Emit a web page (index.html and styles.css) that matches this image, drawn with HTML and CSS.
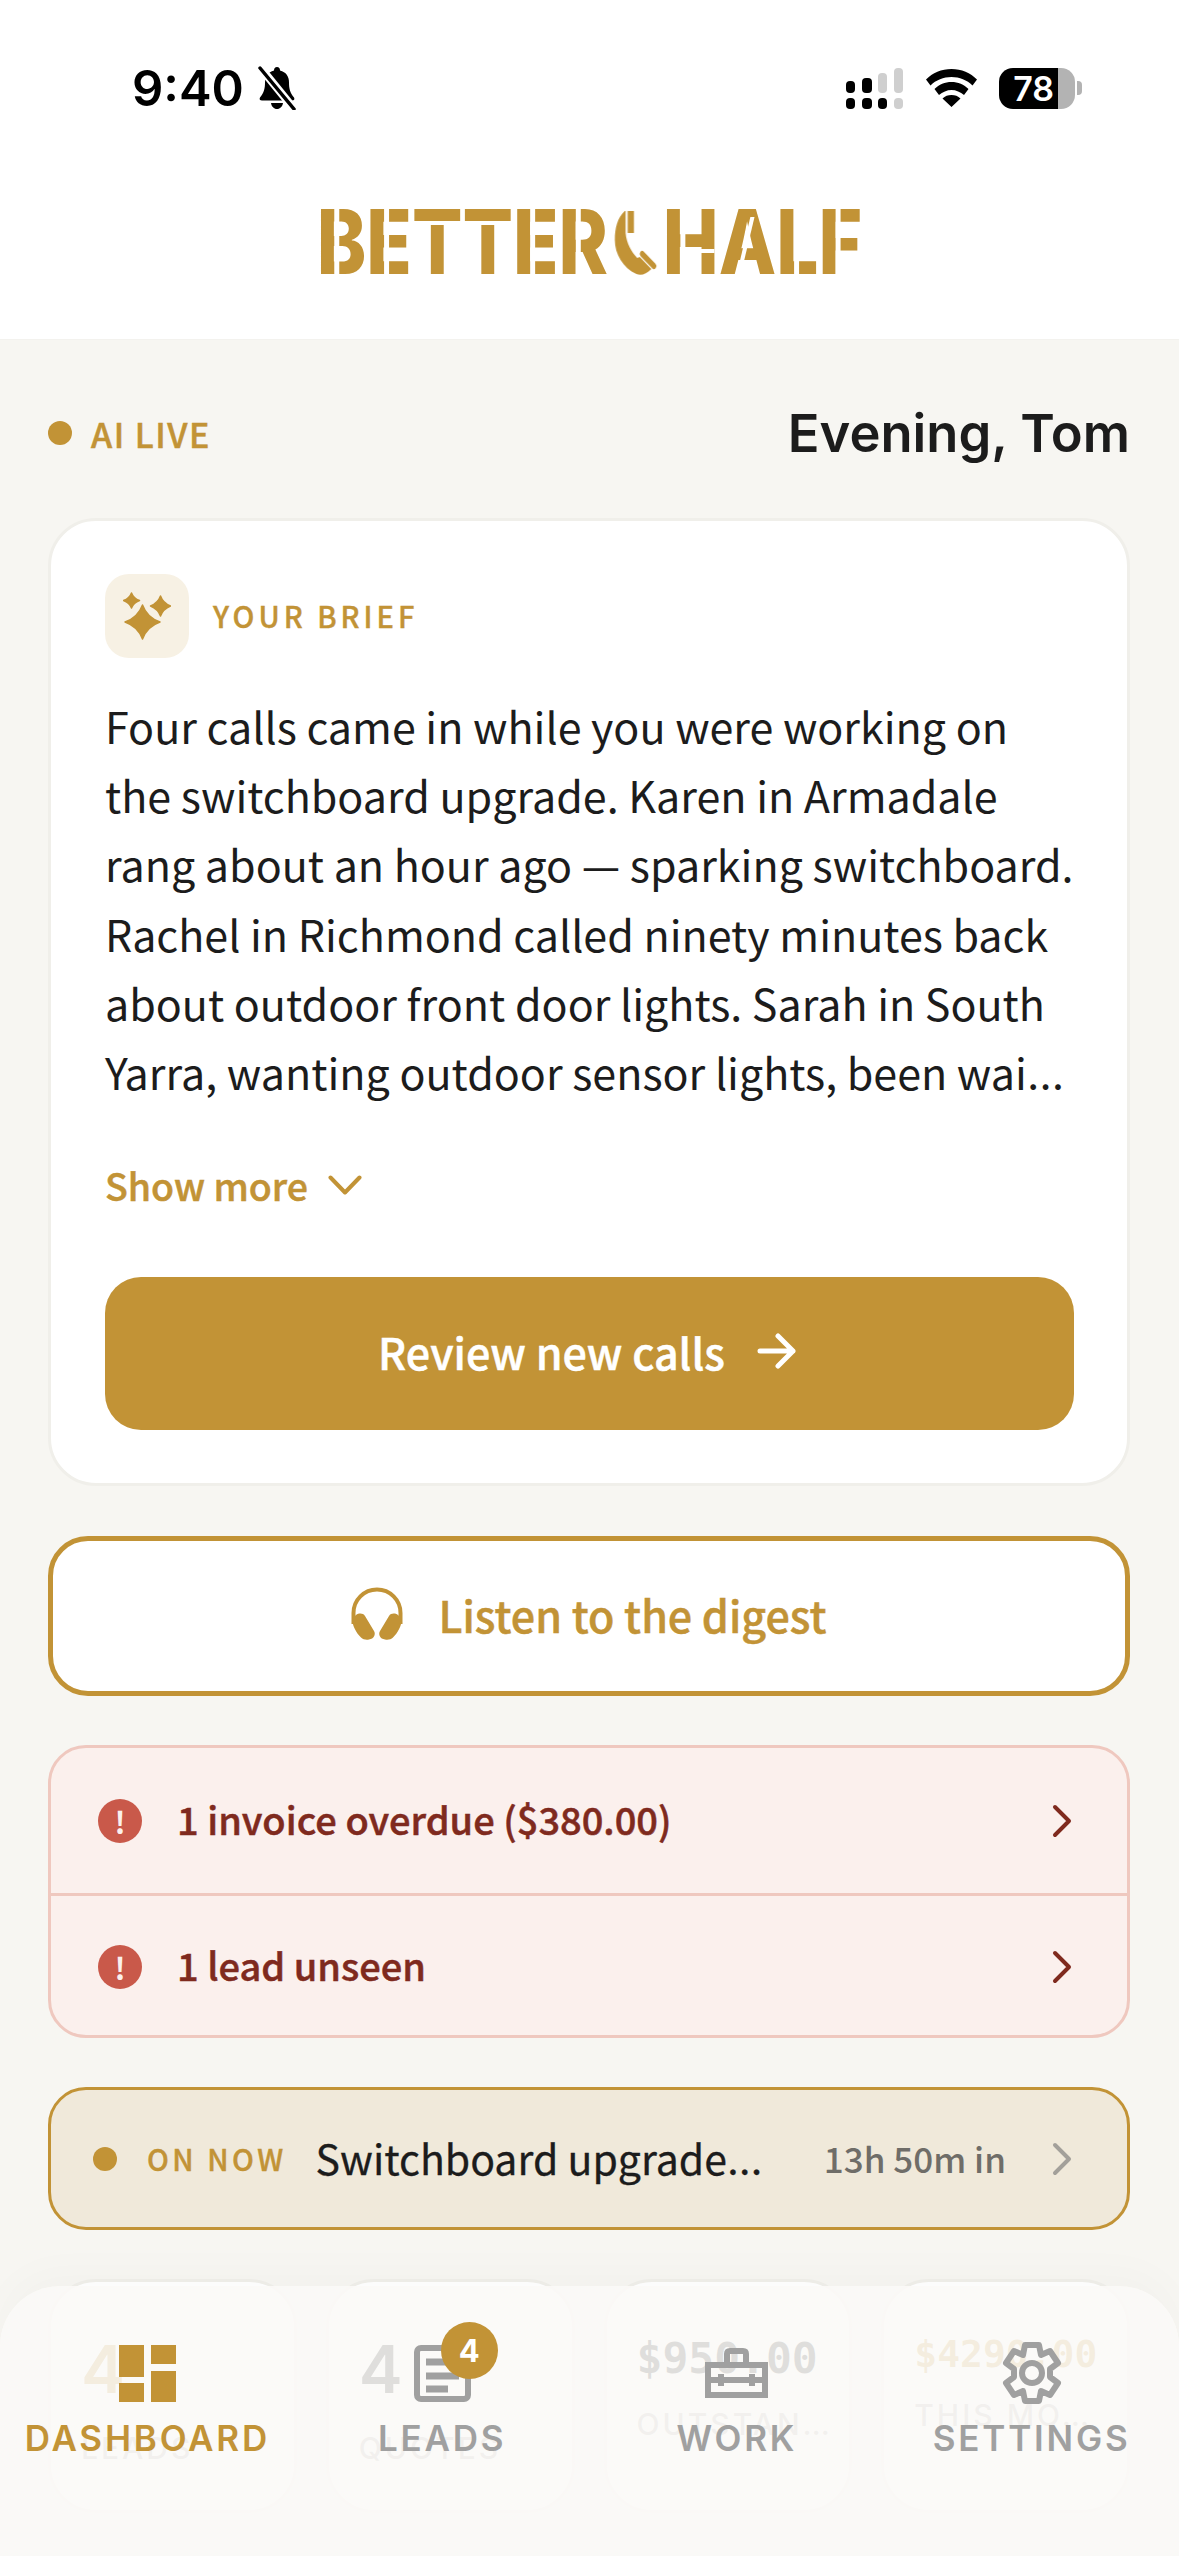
FILE: index.html
```html
<!DOCTYPE html>
<html lang="en">
<head>
    <meta charset="UTF-8">
    <meta name="viewport" content="width=device-width, initial-scale=1.0">
    <title>Better Half Dashboard</title>
    <link rel="stylesheet" href="styles.css">
</head>
<body>
    <div class="phone">
        <header class="top">
            <div class="status-bar">
                <div class="status-left">
                    <span class="clock">9:40</span>
                    <svg class="bell" viewBox="0 0 40 44">
                        <path fill="#000" d="M20 1c2 0 3 1.500 3 3.500 6 1.500 9 6 9 12 0 6 1 10 5 15 1 2 0 3-2 3H5c-2 0-3-1-2-3 4-5 5-9 5-15 0-6 3-10.500 9-12C17 2.500 18 1 20 1zM14 37h12c-.5 3.500-3 6-6 6s-5.500-2.500-6-6z"/>
                        <path stroke="#fff" stroke-width="8" d="M3 1l34 42"/>
                        <path stroke="#000" stroke-width="3.500" stroke-linecap="round" d="M3 2l34 41"/>
                    </svg>
                </div>
                <div class="status-right">
                    <svg class="signal" viewBox="0 0 59 41">
                        <g fill="#000">
                            <rect x="0" y="13" width="9" height="12" rx="4"/><rect x="16" y="10" width="10" height="15" rx="4"/>
                            <rect x="0" y="30" width="9" height="11" rx="4"/><rect x="16" y="30" width="10" height="11" rx="4"/><rect x="32" y="30" width="9" height="11" rx="4"/>
                        </g>
                        <g fill="#cfcfcf">
                            <rect x="32" y="5" width="9" height="20" rx="4"/><rect x="48" y="0" width="9" height="25" rx="4"/>
                            <rect x="48" y="30" width="9" height="11" rx="4"/>
                        </g>
                    </svg>
                    <svg class="wifi" viewBox="0 0 51 38">
                        <path fill="#000" d="M25.500 0c10 0 19 4 25.500 10.500l-4.500 6C41 11 33.500 8 25.500 8S10 11 4.500 16.500L0 10.500C6.500 4 15.500 0 25.500 0zM25.500 13c6.500 0 12.500 2.500 17 7l-4.500 6c-3.500-3-8-5-12.500-5S16.500 23 13 26l-4.500-6c4.500-4.500 10.500-7 17-7zM25.500 26c3.500 0 6.500 1 9 3.500L25.500 38l-9-8.500c2.500-2.500 5.500-3.500 9-3.500z"/>
                    </svg>
                    <div class="battery">
                        <span class="battery-level">78</span>
                        <span class="battery-rest"></span>
                        <span class="battery-nub"></span>
                    </div>
                </div>
            </div>
            <div class="logo" aria-label="Better Half">
                <span class="st">B</span><span class="st">E</span><span class="sh">T</span><span class="sh">T</span><span class="st">E</span><span class="st">R</span><svg class="logo-phone" viewBox="0 0 50 65"><path fill="#c29336" d="M12 1C3 8 0 18 0 30c0 14 10 28 26 34 6 2 12 0 18-5L30 47l-3 1C20 42 14 33 13 23V1zM15.500 1H23v22h-7.500z"/><path stroke="#c29336" stroke-width="6" stroke-linecap="round" d="M33 44l14 12"/></svg><span class="st sh-h">H</span><span class="sv">A</span><span class="st">L</span><span class="st">F</span>
            </div>
        </header>

        <main class="content">
            <div class="greeting-row">
                <div class="live"><span class="dot"></span>AI LIVE</div>
                <h1 class="greeting">Evening, Tom</h1>
            </div>

            <section class="brief-card">
                <div class="brief-head">
                    <span class="brief-icon">
                        <svg viewBox="0 0 48 48" width="48" height="48">
                            <path fill="#c29336" stroke="#c29336" stroke-width="1.500" stroke-linejoin="round" d="M19.500 13Q24 25.500 37 30 24 34.500 19.500 47 15 34.500 2 30 15 25.500 19.500 13zM8.500 1Q10.500 6.500 16.500 8.500 10.500 10.500 8.500 16 6.500 10.500 .5 8.500 6.500 6.500 8.500 1zM37.500 4Q40 11 47.500 14 40 17 37.500 24 35 17 27.500 14 35 11 37.500 4z"/>
                        </svg>
                    </span>
                    <span class="brief-label">YOUR BRIEF</span>
                </div>
                <p class="brief-text">Four calls came in while you were working on the switchboard upgrade. Karen in Armadale rang about an hour ago — sparking switchboard. Rachel in Richmond called ninety minutes back about outdoor front door lights. Sarah in South Yarra, wanting outdoor sensor lights, been wai<span class="ell">…</span></p>
                <div class="show-more">Show more
                    <svg viewBox="0 0 34 20" width="34" height="20"><path fill="none" stroke="#c29336" stroke-width="4" stroke-linecap="round" stroke-linejoin="round" d="M2.500 2.500L17 17.500 31.500 2.500"/></svg>
                </div>
                <button class="review-btn">Review new calls
                    <svg viewBox="0 0 40 36" width="40" height="36"><path fill="none" stroke="#fff" stroke-width="5" stroke-linecap="round" stroke-linejoin="round" d="M3 18h33M21 3l15 15-15 15"/></svg>
                </button>
            </section>

            <button class="digest-btn">
                <svg viewBox="0 0 52 53" width="52" height="53">
                    <path fill="none" stroke="#c29336" stroke-width="4" d="M2.500 37V26a23.500 23.500 0 0 1 47 0v11"/>
                    <path fill="#c29336" d="M1 30h2l2-2c3-2 7-2 9 1l9 15c2 3 0 8-5 8.500-3 .5-6 0-8-2-5-5-9-12-9-20.500zM51 30h-2l-2-2c-3-2-7-2-9 1l-9 15c-2 3 0 8 5 8.500 3 .5 6 0 8-2 5-5 9-12 9-20.500z"/>
                </svg>
                Listen to the digest
            </button>

            <section class="alerts">
                <div class="alert-row">
                    <span class="alert-icon">!</span>
                    <span class="alert-text">1 invoice overdue ($380.00)</span>
                    <svg class="chev" viewBox="0 0 20 34"><path fill="none" stroke="#7f2a1e" stroke-width="4" stroke-linecap="round" stroke-linejoin="round" d="M3 3l14 14L3 31"/></svg>
                </div>
                <div class="alert-row">
                    <span class="alert-icon">!</span>
                    <span class="alert-text">1 lead unseen</span>
                    <svg class="chev" viewBox="0 0 20 34"><path fill="none" stroke="#7f2a1e" stroke-width="4" stroke-linecap="round" stroke-linejoin="round" d="M3 3l14 14L3 31"/></svg>
                </div>
            </section>

            <section class="on-now">
                <span class="dot"></span>
                <span class="on-label">ON NOW</span>
                <span class="on-title">Switchboard upgrade<span class="ell">…</span></span>
                <span class="on-time">13h 50m in</span>
                <svg class="chev" viewBox="0 0 20 34"><path fill="none" stroke="#a3a09a" stroke-width="4" stroke-linecap="round" stroke-linejoin="round" d="M3 3l14 14L3 31"/></svg>
            </section>

            <section class="stats">
                <div class="stat stat-count"><div class="stat-num gold">4</div><div class="stat-label">LEADS</div></div>
                <div class="stat stat-count"><div class="stat-num">4</div><div class="stat-label">QUOTES</div></div>
                <div class="stat stat-money"><div class="stat-num">$950.00</div><div class="stat-label">OUTSTAN…</div></div>
                <div class="stat stat-money long"><div class="stat-num gold">$4290.00</div><div class="stat-label">THIS MO…</div></div>
            </section>
        </main>

        <nav class="tabbar">
            <a class="tab active">
                <span class="tab-icon">
                    <svg viewBox="0 0 57 57" width="57" height="57"><path fill="#c29336" d="M0 0h25v32H0zM0 38h25v19H0zM32 0h25v19H32zM32 26h25v31H32z"/></svg>
                </span>
                <span class="tab-label">DASHBOARD</span>
            </a>
            <a class="tab">
                <span class="tab-icon">
                    <svg viewBox="0 0 57 57" width="57" height="57"><rect x="3" y="3" width="51" height="51" rx="4" fill="none" stroke="#a0a0a0" stroke-width="6"/><path stroke="#a0a0a0" stroke-width="7" d="M12 17h33M12 31h33M12 44h22"/></svg>
                    <b class="badge">4</b>
                </span>
                <span class="tab-label">LEADS</span>
            </a>
            <a class="tab">
                <span class="tab-icon">
                    <svg viewBox="0 0 63 50" width="63" height="50"><g fill="none" stroke="#a0a0a0" stroke-width="6"><path d="M3 17h57v30H3zM22 16V6c0-2 1-3 3-3h13c2 0 3 1 3 3v10"/><path d="M3 32h57"/></g><path stroke="#a0a0a0" stroke-width="6" d="M16 26v12M47 26v12"/></svg>
                </span>
                <span class="tab-label">WORK</span>
            </a>
            <a class="tab">
                <span class="tab-icon">
                    <svg viewBox="0 0 62 62" width="62" height="62"><g fill="none" stroke="#a0a0a0" stroke-width="6" stroke-linejoin="round"><circle cx="31" cy="31" r="10"/><path d="M24 3h14l2 10 9-4 8 12-8 6v8l8 6-8 12-9-4-2 10H24l-2-10-9 4-8-12 8-6v-8l-8-6 8-12 9 4z"/></g></svg>
                </span>
                <span class="tab-label">SETTINGS</span>
            </a>
        </nav>
    </div>
</body>
</html>
```

FILE: styles.css
```css
:root {
    --gold: #c29336;
    --bg: #f7f6f2;
    --ink: #1c1c1c;
    --sans: "Noto Sans CJK SC", "Noto Sans", sans-serif;
    --head: Inter, "Noto Sans", sans-serif;
}
* { box-sizing: border-box; margin: 0; padding: 0; }
body { background: var(--bg); font-family: var(--sans); color: var(--ink); }
.phone {
    position: relative;
    width: 1179px;
    height: 2556px;
    overflow: hidden;
    background: var(--bg);
}
/* the CJK font centres its ellipsis, the design has it on the baseline */
.ell { font-family: Inter, sans-serif; }

/* header */
.top { background: #fff; height: 340px; border-bottom: 1px solid #f3f2ee; }
.status-bar {
    display: flex;
    justify-content: space-between;
    align-items: center;
    height: 176px;
    padding: 0 97px 0 132px;
}
.status-left, .status-right { display: flex; align-items: center; }
.clock { font-family: var(--head); font-weight: 600; font-size: 49px; color: #000; }
.bell { width: 40px; height: 44px; margin-left: 13px; }
.signal { width: 59px; height: 41px; }
.wifi { width: 51px; height: 38px; margin-left: 21px; }
.battery { display: flex; align-items: center; height: 41px; margin-left: 22px; }
.battery-level {
    width: 59px;
    height: 41px;
    padding-right: 4px;
    background: #000;
    color: #fff;
    border-radius: 14px 0 0 14px;
    font-family: var(--head);
    font-weight: 600;
    font-size: 34px;
    line-height: 41px;
    text-align: right;
}
.battery-rest { width: 17px; height: 41px; background: #b3b3b3; border-radius: 0 14px 14px 0; }
.battery-nub { width: 5px; height: 14px; margin-left: 2px; background: #b3b3b3; border-radius: 0 4px 4px 0; }

.logo {
    display: flex;
    justify-content: center;
    align-items: center;
    height: 66px;
    margin-top: 33px;
    color: var(--gold);
    font-family: Inter, sans-serif;
    font-weight: 800;
    font-size: 90px;
    line-height: 66px;
    transform: scaleX(0.83);
}
.logo span { position: relative; display: block; height: 66px; }
.logo .st::after {
    content: "";
    position: absolute;
    top: 0; bottom: 0;
    left: 21px;
    width: 6px;
    background: #fff;
}
.logo .sh::after {
    content: "";
    position: absolute;
    left: 0; right: 0;
    top: 12px;
    height: 4px;
    background: #fff;
}
.logo .sv::after {
    content: "";
    position: absolute;
    left: 43%;
    top: 8px; bottom: 0;
    width: 5px;
    background: #fff;
    transform: skewX(-16deg);
}
.logo .sh-h::before {
    content: "";
    position: absolute;
    left: 44px;
    top: 40px;
    width: 18px;
    height: 4px;
    background: #fff;
    z-index: 1;
}
.logo-phone { width: 62px; height: 65px; margin: 0 2px; }

/* content */
.content { padding: 0 49px 0 48px; }
.greeting-row {
    display: flex;
    justify-content: space-between;
    align-items: center;
    height: 178px;
    padding-top: 8px;
}
.live {
    display: flex;
    align-items: center;
    color: var(--gold);
    font-size: 34px;
    font-weight: 500;
    letter-spacing: 1.500px;
    -webkit-text-stroke: 0.5px var(--gold);
}
.dot { width: 24px; height: 24px; border-radius: 50%; background: var(--gold); flex: none; }
.live .dot { margin-right: 19px; }
.greeting { font-family: var(--head); font-size: 52.500px; font-weight: 600; color: var(--ink); }

.brief-card {
    background: #fff;
    border: 3px solid #f0efea;
    border-radius: 48px;
    height: 968px;
    padding: 53px 54px 0;
}
.brief-head { display: flex; align-items: center; gap: 24px; }
.brief-icon {
    display: flex;
    align-items: center;
    justify-content: center;
    width: 84px;
    height: 84px;
    border-radius: 24px;
    background: #f7f1e4;
}
.brief-label { color: var(--gold); font-size: 29px; font-weight: 500; letter-spacing: 4px; padding-bottom: 2px; -webkit-text-stroke: 0.4px var(--gold); }
.brief-text {
    margin: 33px -8px 0 0;
    font-size: 43px;
    line-height: 69.200px;
    color: var(--ink);
}
.show-more {
    display: flex;
    align-items: center;
    gap: 20px;
    margin-top: 48px;
    color: var(--gold);
    font-size: 37.500px;
    font-weight: 500;
    -webkit-text-stroke: 0.5px var(--gold);
}
.review-btn {
    display: flex;
    align-items: center;
    justify-content: center;
    gap: 32px;
    width: 969px;
    height: 153px;
    margin-top: 65px;
    padding: 0 4px 6px 0;
    border: none;
    border-radius: 36px;
    background: var(--gold);
    color: #fff;
    font-family: var(--sans);
    font-size: 43px;
    font-weight: 500;
    -webkit-text-stroke: 0.5px #fff;
}

.digest-btn {
    display: flex;
    align-items: center;
    justify-content: center;
    gap: 35px;
    width: 100%;
    height: 160px;
    margin-top: 50px;
    padding-bottom: 5px;
    background: #fff;
    border: 5px solid var(--gold);
    border-radius: 40px;
    color: var(--gold);
    font-family: var(--sans);
    font-size: 43px;
    font-weight: 500;
    -webkit-text-stroke: 0.5px var(--gold);
}

.alerts {
    margin-top: 49px;
    height: 293px;
    background: #fbf0ed;
    border: 3px solid #efc8bf;
    border-radius: 38px;
}
.alert-row {
    display: flex;
    align-items: center;
    height: 145px;
    padding: 0 55px 0 47px;
}
.alert-row + .alert-row { border-top: 3px solid #efc8bf; height: 145px; }
.alert-icon {
    width: 44px;
    height: 44px;
    flex: none;
    border-radius: 50%;
    background: #c9594a;
    color: #fbf0ed;
    font-size: 30px;
    font-weight: 700;
    line-height: 44px;
    text-align: center;
}
.alert-text { flex: 1; margin-left: 35px; padding-bottom: 5px; color: #7f2a1e; font-size: 38px; font-weight: 500; -webkit-text-stroke: 0.5px #7f2a1e; }
.chev { width: 20px; height: 34px; flex: none; }

.on-now {
    display: flex;
    align-items: center;
    height: 143px;
    margin-top: 49px;
    padding: 0 55px 0 42px;
    background: #f0e9da;
    border: 3px solid var(--gold);
    border-radius: 38px;
}
.on-label { margin-left: 30px; padding-bottom: 2px; color: var(--gold); font-size: 29px; font-weight: 500; letter-spacing: 3.500px; -webkit-text-stroke: 0.4px var(--gold); }
.on-title { margin-left: 29px; flex: 1; padding-bottom: 3px; font-size: 41px; color: var(--ink); -webkit-text-stroke: 0.3px var(--ink); }
.on-time { margin-right: 46px; padding-bottom: 2px; font-size: 35px; font-weight: 500; color: #6f6d68; }

.stats {
    display: grid;
    grid-template-columns: repeat(4, 1fr);
    gap: 29px;
    margin-top: 49px;
}
.stat {
    display: flex;
    flex-direction: column;
    justify-content: center;
    height: 234px;
    padding: 0 30px;
    background: #fff;
    border: 3px solid #f0efea;
    border-radius: 48px;
    overflow: hidden;
}
.stat-num { font-family: var(--head); font-weight: 600; color: #1c1c1c; line-height: 1.100; }
.stat-num.gold { color: var(--gold); }
.stat-label { font-family: var(--head); font-size: 30px; font-weight: 500; line-height: 1.100; letter-spacing: 3px; color: #b0aeaa; white-space: nowrap; }
.stat-count { padding-top: 6px; }
.stat-count .stat-num { font-size: 66px; margin-bottom: 27px; }
.stat-money { padding-bottom: 16px; }
.stat-money .stat-num { font-family: "DejaVu Sans Mono", monospace; font-size: 43px; font-weight: 700; white-space: nowrap; margin-bottom: 26px; }
.stat-money.long { padding-bottom: 26px; }
.stat-money.long .stat-num { font-size: 38px; margin-bottom: 24px; }

/* tab bar floats over the page */
.tabbar {
    position: absolute;
    left: 0; right: 0; bottom: 0;
    height: 270px;
    display: grid;
    grid-template-columns: repeat(4, 1fr);
    background: rgba(250, 249, 247, 0.88);
    border-radius: 60px 60px 0 0;
    box-shadow: 0 -16px 40px rgba(0, 0, 0, 0.02);
}
.tab {
    display: flex;
    flex-direction: column;
    align-items: center;
    justify-content: flex-end;
    height: 177px;
    color: #a0a0a0;
    font-family: var(--head);
    font-size: 35px;
    font-weight: 600;
    letter-spacing: 2.800px;
}
.tab-label { height: 50px; line-height: 50px; white-space: nowrap; }
.tab.active { color: var(--gold); }
.tab-icon {
    position: relative;
    display: flex;
    align-items: center;
    justify-content: center;
    height: 62px;
    margin-bottom: 9px;
}
.badge {
    position: absolute;
    left: 27px;
    top: -20px;
    width: 57px;
    height: 57px;
    border-radius: 50%;
    background: var(--gold);
    color: #fff;
    font-size: 31px;
    font-weight: 700;
    line-height: 57px;
    letter-spacing: 0;
    text-align: center;
}
```
